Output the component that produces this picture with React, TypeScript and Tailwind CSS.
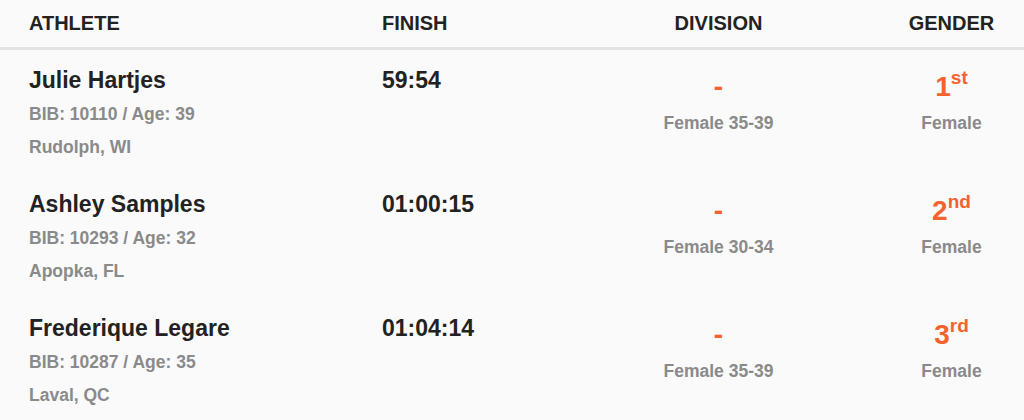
import React from "react";

type Row = {
  name: string;
  bib: string;
  age: string;
  loc: string;
  finish: string;
  division: string;
  place: string;
  suffix: string;
  gender: string;
};

const rows: Row[] = [
  { name: "Julie Hartjes", bib: "10110", age: "39", loc: "Rudolph, WI", finish: "59:54", division: "Female 35-39", place: "1", suffix: "st", gender: "Female" },
  { name: "Ashley Samples", bib: "10293", age: "32", loc: "Apopka, FL", finish: "01:00:15", division: "Female 30-34", place: "2", suffix: "nd", gender: "Female" },
  { name: "Frederique Legare", bib: "10287", age: "35", loc: "Laval, QC", finish: "01:04:14", division: "Female 35-39", place: "3", suffix: "rd", gender: "Female" },
];

export default function App() {
  return (
    <div
      className="w-[1024px] h-[420px] overflow-hidden bg-[#fafafa]"
      style={{ fontFamily: '"Liberation Sans", Arial, sans-serif' }}
    >
      <div className="flex pl-[29px] pt-[11px] pb-[12px] border-b-[3px] border-[#e3e3e3] text-[20px] leading-[24px] font-bold text-[#222222]">
        <div className="w-[353px]">ATHLETE</div>
        <div className="w-[175px]">FINISH</div>
        <div className="w-[323px] text-center">DIVISION</div>
        <div className="w-[143px] text-center">GENDER</div>
      </div>
      {rows.map((r) => (
        <div key={r.name} className="flex pl-[29px] h-[124px] font-bold">
          <div className="w-[353px] pt-[12px]">
            <div className="text-[23px] leading-[36px] text-[#222222]">{r.name}</div>
            <div className="text-[17.5px] leading-[33px] text-[#8a8a8a]">
              BIB: {r.bib} / Age: {r.age}
            </div>
            <div className="text-[17.5px] leading-[33px] text-[#8a8a8a]">{r.loc}</div>
          </div>
          <div className="w-[175px] pt-[12px] text-[23px] leading-[36px] text-[#222222]">{r.finish}</div>
          <div className="w-[323px] pt-[19px] flex flex-col items-center">
            <div className="text-[28px] leading-[36px] text-[#f4632f]">-</div>
            <div className="mt-[2px] text-[17.5px] leading-[33px] text-[#8a8a8a]">{r.division}</div>
          </div>
          <div className="w-[143px] pt-[19px] flex flex-col items-center">
            <div className="text-[28px] leading-[36px] text-[#f4632f]">
              {r.place}
              <span className="relative top-[-12px] text-[19px] leading-none">{r.suffix}</span>
            </div>
            <div className="mt-[2px] text-[17.5px] leading-[33px] text-[#8a8a8a]">{r.gender}</div>
          </div>
        </div>
      ))}
    </div>
  );
}
